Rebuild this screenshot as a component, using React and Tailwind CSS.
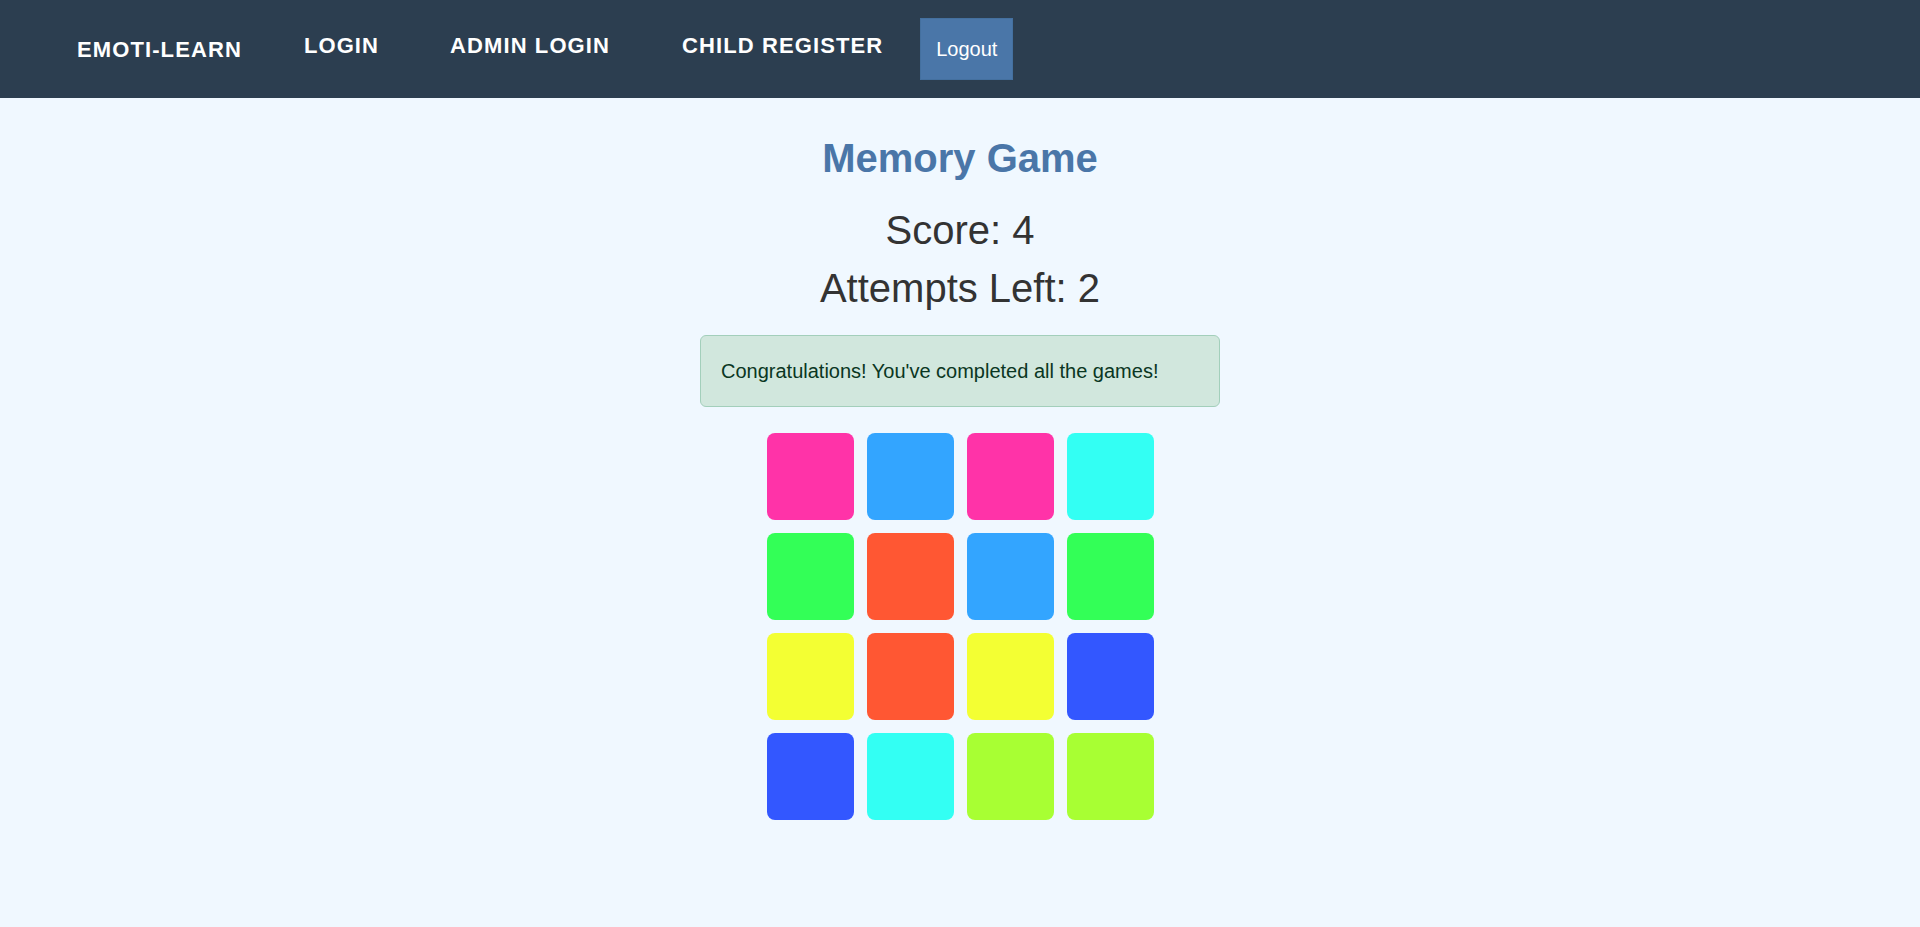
import { useState } from 'react';

const tiles = [
  '#ff33a8', '#33a1ff', '#ff33a8', '#33fff3',
  '#33ff57', '#ff5733', '#33a1ff', '#33ff57',
  '#f3ff33', '#ff5733', '#f3ff33', '#3357ff',
  '#3357ff', '#33fff3', '#a8ff33', '#a8ff33',
];

const tileClass = {
  '#ff33a8': 'bg-[#ff33a8]',
  '#33a1ff': 'bg-[#33a5ff]',
  '#33fff3': 'bg-[#33fff3]',
  '#33ff57': 'bg-[#33ff57]',
  '#ff5733': 'bg-[#ff5733]',
  '#f3ff33': 'bg-[#f3ff33]',
  '#3357ff': 'bg-[#3357ff]',
  '#a8ff33': 'bg-[#a8ff33]',
};

export default function App() {
  const [score] = useState(4);
  const [attempts] = useState(2);

  return (
    <div className="min-h-[927px] bg-[#f0f8ff] font-['Liberation_Sans',Arial,sans-serif]">
      {/* Navbar */}
      <nav className="flex items-start h-[98px] bg-[#2c3e50] pl-[77px] text-white">
        <a className="mt-[37px] text-[22px] leading-[26px] font-bold tracking-[1.1px]">EMOTI-LEARN</a>
        <a className="ml-[62px] mt-[33px] text-[22px] leading-[26px] font-bold tracking-[1.1px]">LOGIN</a>
        <a className="ml-[71px] mt-[33px] text-[22px] leading-[26px] font-bold tracking-[1.1px]">ADMIN LOGIN</a>
        <a className="ml-[72px] mt-[33px] text-[22px] leading-[26px] font-bold tracking-[1.1px]">CHILD REGISTER</a>
        <button className="ml-[37px] mt-[18px] px-[15px] py-[15px] text-[20px] leading-[30px] bg-[#4a76a8] border border-[#44709f] text-white">
          Logout
        </button>
      </nav>

      {/* Game */}
      <div className="flex flex-col items-center">
        <h2 className="mt-[36px] text-[40px] leading-[48px] font-bold text-[#4a76a8]">Memory Game</h2>
        <p className="mt-[24px] text-[40px] leading-[48px] text-[#333]">Score: {score}</p>
        <p className="mt-[10px] text-[40px] leading-[48px] text-[#333]">Attempts Left: {attempts}</p>

        <div className="relative mt-[23px] w-[520px] px-[20px] py-[20px] rounded-[6px] border border-[#a3cfbb] bg-[#d1e7dd] text-[#0a3622] text-[20px] leading-[30px]">
          Congratulations! You've completed all the games!
          <span className="absolute right-[20px] top-[27px] w-[20px] h-[20px] opacity-10" />
        </div>

        <div className="mt-[26px] grid grid-cols-4 gap-[13px]">
          {tiles.map((c, i) => (
            <div key={i} className={`w-[87px] h-[87px] rounded-[8px] ${tileClass[c]}`} />
          ))}
        </div>
      </div>
    </div>
  );
}
